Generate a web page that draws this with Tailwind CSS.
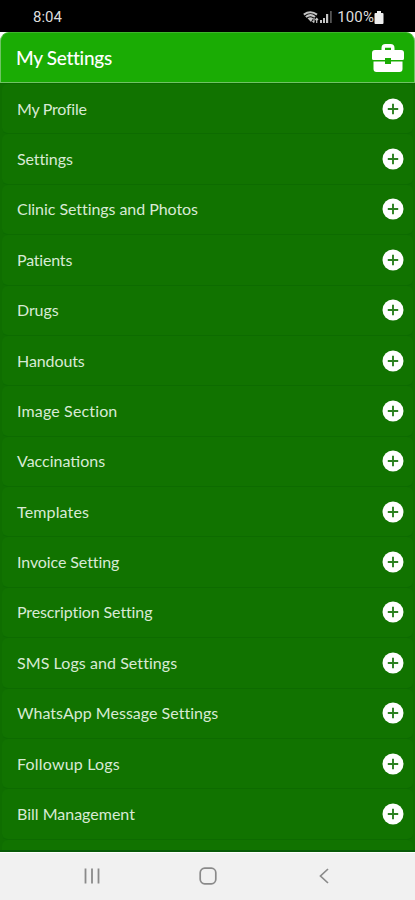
<!DOCTYPE html>
<html lang="en">
<head>
    <meta charset="UTF-8">
    <meta name="viewport" content="width=device-width, initial-scale=1.0">
    <title>My Settings</title>
    <script src="https://cdn.jsdelivr.net/npm/@tailwindcss/browser@4"></script>
</head>
<body class="bg-black font-['Lato','Open_Sans',sans-serif]">
    <!-- Shared icons -->
    <svg class="hidden">
        <symbol id="plus" viewBox="0 0 22 22">
            <circle cx="11" cy="11" r="10.500" fill="#fff"/>
            <path d="M11 5.800v10.400M5.800 11h10.400" stroke="#2b8020" stroke-width="1.900"/>
        </symbol>
    </svg>

    <div class="w-[415px] h-[900px] flex flex-col overflow-hidden">
        <!-- Status Bar -->
        <div class="h-8 shrink-0 bg-black text-[#dedede] flex items-center justify-between pl-[33px] pr-[31px] pt-[2px] font-['Roboto',sans-serif] text-[15px]">
            <span>8:04</span>
            <div class="flex items-center">
                <svg class="w-[16px] h-[13px]" viewBox="0 0 16 13" fill="none" stroke="#c4c4c4">
                    <path d="M.8 3.600Q7.500-1 14 3.600M2.800 6Q7.500 2.300 12 6" stroke-width="2"/>
                    <path d="M4.500 7.300Q7.500 5.200 10.200 7.300L8 11z" fill="#c4c4c4" stroke="none"/>
                    <path d="M11 7v4.500M9.500 10l1.500 1.700M13.700 12V7.500M12.400 9l1.300-1.500L15 9" stroke-width="1.200"/>
                </svg>
                <svg class="w-[13px] h-[12px] ml-px mr-[4px]" viewBox="0 0 13 12">
                    <path d="M0 9h2v3H0zM3 7h2v5H3zM6 3h2.200v9H6z" fill="#c4c4c4"/>
                    <path d="M10 0h1.800v12H10z" fill="#555"/>
                </svg>
                <span class="tracking-[0.100px]">100%</span>
                <svg class="w-[10px] h-[13px]" viewBox="0 0 10 13" fill="#eee">
                    <path d="M3 0h4v2h1.500q1 0 1 1v9q0 1-1 1h-7q-1 0-1-1V3q0-1 1-1H3z"/>
                </svg>
            </div>
        </div>

        <!-- Header -->
        <div class="h-[51px] shrink-0 bg-white">
            <div class="h-[51px] bg-[#1aac04] rounded-t-[9px] border border-[#6fc463] border-t-[#3db62c] flex items-center justify-between pl-[15px] pr-[10px]">
                <h1 class="text-white text-[19px] font-medium tracking-[-0.300px] pt-px">My Settings</h1>
                <!-- Briefcase -->
                <svg class="w-8 h-7" viewBox="0 0 32 28" fill="#fff">
                    <path fill-rule="evenodd" d="M9.500 6V4q0-4 4-4h5q4 0 4 4v2H29q3 0 3 3v5.500q0 1.500-1.500 1.500H19v-2h-6v2H1.500Q0 16 0 14.500V9q0-3 3-3zM13 6h6V3.800h-6z"/>
                    <path d="M1.500 17.500H13V20h6v-2.500h11.500V25q0 3-3 3h-23q-3 0-3-3z"/>
                </svg>
            </div>
        </div>

        <!-- Settings List -->
        <div class="h-[769px] shrink-0 overflow-hidden bg-[#0f6e00] border-t border-b-2 border-t-[#0d6800] border-b-[#075b08] text-[#d8ead5] text-[16px]">
            <div class="h-[50.390px] flex items-center justify-between mx-[2px] pl-[15px] pr-[9px] bg-[#117300] rounded-[6px] border-b border-[#0d6b00]">
                <span class="tracking-[-0.250px]">My Profile</span>
                <svg class="w-[22px] h-[22px]"><use href="#plus"/></svg>
            </div>
            <div class="h-[50.390px] flex items-center justify-between mx-[2px] pl-[15px] pr-[9px] bg-[#117300] rounded-[6px] border-b border-[#0d6b00]">
                <span class="tracking-[-0.100px]">Settings</span>
                <svg class="w-[22px] h-[22px]"><use href="#plus"/></svg>
            </div>
            <div class="h-[50.390px] flex items-center justify-between mx-[2px] pl-[15px] pr-[9px] bg-[#117300] rounded-[6px] border-b border-[#0d6b00]">
                <span class="tracking-[-0.060px]">Clinic Settings and Photos</span>
                <svg class="w-[22px] h-[22px]"><use href="#plus"/></svg>
            </div>
            <div class="h-[50.390px] flex items-center justify-between mx-[2px] pl-[15px] pr-[9px] bg-[#117300] rounded-[6px] border-b border-[#0d6b00]">
                <span class="tracking-[-0.200px]">Patients</span>
                <svg class="w-[22px] h-[22px]"><use href="#plus"/></svg>
            </div>
            <div class="h-[50.390px] flex items-center justify-between mx-[2px] pl-[15px] pr-[9px] bg-[#117300] rounded-[6px] border-b border-[#0d6b00]">
                <span class="tracking-[-0.100px]">Drugs</span>
                <svg class="w-[22px] h-[22px]"><use href="#plus"/></svg>
            </div>
            <div class="h-[50.390px] flex items-center justify-between mx-[2px] pl-[15px] pr-[9px] bg-[#117300] rounded-[6px] border-b border-[#0d6b00]">
                <span class="tracking-[-0.100px]">Handouts</span>
                <svg class="w-[22px] h-[22px]"><use href="#plus"/></svg>
            </div>
            <div class="h-[50.390px] flex items-center justify-between mx-[2px] pl-[15px] pr-[9px] bg-[#117300] rounded-[6px] border-b border-[#0d6b00]">
                <span class="tracking-[0.150px]">Image Section</span>
                <svg class="w-[22px] h-[22px]"><use href="#plus"/></svg>
            </div>
            <div class="h-[50.390px] flex items-center justify-between mx-[2px] pl-[15px] pr-[9px] bg-[#117300] rounded-[6px] border-b border-[#0d6b00]">
                <span>Vaccinations</span>
                <svg class="w-[22px] h-[22px]"><use href="#plus"/></svg>
            </div>
            <div class="h-[50.390px] flex items-center justify-between mx-[2px] pl-[15px] pr-[9px] bg-[#117300] rounded-[6px] border-b border-[#0d6b00]">
                <span class="tracking-[0.150px]">Templates</span>
                <svg class="w-[22px] h-[22px]"><use href="#plus"/></svg>
            </div>
            <div class="h-[50.390px] flex items-center justify-between mx-[2px] pl-[15px] pr-[9px] bg-[#117300] rounded-[6px] border-b border-[#0d6b00]">
                <span class="tracking-[-0.100px]">Invoice Setting</span>
                <svg class="w-[22px] h-[22px]"><use href="#plus"/></svg>
            </div>
            <div class="h-[50.390px] flex items-center justify-between mx-[2px] pl-[15px] pr-[9px] bg-[#117300] rounded-[6px] border-b border-[#0d6b00]">
                <span class="tracking-[-0.120px]">Prescription Setting</span>
                <svg class="w-[22px] h-[22px]"><use href="#plus"/></svg>
            </div>
            <div class="h-[50.390px] flex items-center justify-between mx-[2px] pl-[15px] pr-[9px] bg-[#117300] rounded-[6px] border-b border-[#0d6b00]">
                <span class="tracking-[0.070px]">SMS Logs and Settings</span>
                <svg class="w-[22px] h-[22px]"><use href="#plus"/></svg>
            </div>
            <div class="h-[50.390px] flex items-center justify-between mx-[2px] pl-[15px] pr-[9px] bg-[#117300] rounded-[6px] border-b border-[#0d6b00]">
                <span class="tracking-[0.020px]">WhatsApp Message Settings</span>
                <svg class="w-[22px] h-[22px]"><use href="#plus"/></svg>
            </div>
            <div class="h-[50.390px] flex items-center justify-between mx-[2px] pl-[15px] pr-[9px] bg-[#117300] rounded-[6px] border-b border-[#0d6b00]">
                <span class="tracking-[0.200px]">Followup Logs</span>
                <svg class="w-[22px] h-[22px]"><use href="#plus"/></svg>
            </div>
            <div class="h-[50.390px] flex items-center justify-between mx-[2px] pl-[15px] pr-[9px] bg-[#117300] rounded-[6px] border-b border-[#0d6b00]">
                <span>Bill Management</span>
                <svg class="w-[22px] h-[22px]"><use href="#plus"/></svg>
            </div>
            <div class="h-[50.390px] mx-[2px] bg-[#117300] rounded-[6px]"></div>
        </div>

        <!-- Navigation Bar -->
        <div class="h-12 shrink-0 bg-[#f1f1f1] border-t border-white flex items-center justify-between pl-[83px] pr-[82px] pb-[2px]">
            <svg class="w-[18px] h-[18px]" viewBox="0 0 18 18" stroke="#8a8a8a" stroke-width="1.800">
                <path d="M2.500 1.500v15M9 1.500v15M15.500 1.500v15"/>
            </svg>
            <svg class="w-[18px] h-[18px]" viewBox="0 0 18 18" fill="none" stroke="#8a8a8a" stroke-width="1.700">
                <rect x="1.200" y="1.200" width="15.600" height="15.600" rx="4.500"/>
            </svg>
            <svg class="w-[18px] h-[18px]" viewBox="0 0 18 18" fill="none" stroke="#8a8a8a" stroke-width="1.700">
                <path d="M13 2L5.500 9l7.500 7"/>
            </svg>
        </div>
    </div>
</body>
</html>
